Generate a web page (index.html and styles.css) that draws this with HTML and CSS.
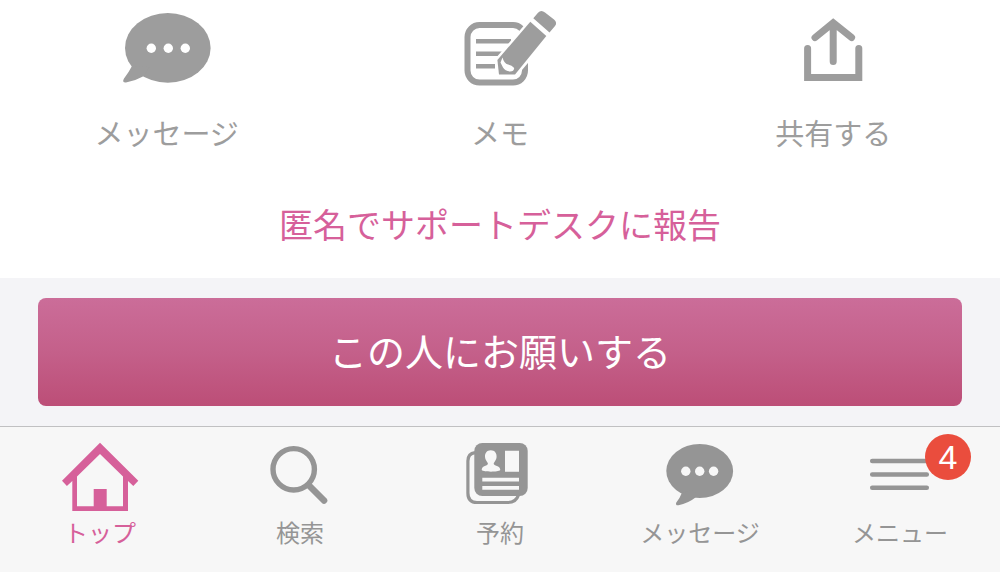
FILE: index.html
```html
<!DOCTYPE html>
<html lang="ja">
<head>
<meta charset="utf-8">
<meta name="viewport" content="width=device-width, initial-scale=1">
<title>プロフィール</title>
<link rel="stylesheet" href="styles.css">
</head>
<body>
<main class="profile">
  <div class="actions">
    <button class="action" type="button">
      <svg class="action-icon" viewBox="107 8 120 82" aria-hidden="true">
        <ellipse cx="167.8" cy="47.9" rx="42.8" ry="34.8" fill="currentColor"/>
        <path d="M131.7 66.5 Q129 72 124 78.5 Q121.6 82.8 126 82.6 Q135 81 143.5 76.3 L150 66 Z" fill="currentColor"/>
        <g fill="#fff"><circle cx="151.3" cy="48.3" r="4.7"/><circle cx="168.3" cy="48.3" r="4.7"/><circle cx="185.3" cy="48.3" r="4.7"/></g>
      </svg>
      <span class="action-label">メッセージ</span>
    </button>
    <button class="action" type="button">
      <svg class="action-icon" viewBox="440 8 120 82" aria-hidden="true">
        <rect x="467.5" y="25" width="57.5" height="57.6" rx="12" fill="none" stroke="currentColor" stroke-width="6"/>
        <path d="M476 41.3H511M476 53.8H502M476 66.3H495" stroke="currentColor" stroke-width="4.6" fill="none"/>
        <path d="M540 11 L557 25 L515 74.5 H498.5 L497.5 60 Z" fill="#fff" stroke="#fff" stroke-width="5" stroke-linejoin="round"/>
        <path d="M530.3 21.7 L546.3 36 L515 74.4 H499 L497.4 60 Z" fill="currentColor"/>
        <path d="M533.3 18.3 L538 12.8 Q541 9.2 545 12.4 L554 19.4 Q557.6 22.6 555 26 L549.5 32.6 Z" fill="currentColor"/>
        <path d="M502.5 57.5 Q504 63.5 508 64.5 Q512 65 514.2 68 Q514 71.5 510 71.6 Q505 71 503 67.5 L500.5 62.5 Z" fill="#fff"/>
      </svg>
      <span class="action-label">メモ</span>
    </button>
    <button class="action" type="button">
      <svg class="action-icon" viewBox="773 8 120 82" aria-hidden="true">
        <g fill="none" stroke="currentColor" stroke-width="7" stroke-linecap="round">
          <path d="M807.6 48.6V77.5H858.8V48.6"/>
          <path d="M815 37.6L833.2 22.8L851.6 37.6M833.2 24V61.6"/>
        </g>
      </svg>
      <span class="action-label">共有する</span>
    </button>
  </div>
  <a class="report" href="#report">匿名でサポートデスクに報告</a>
</main>
<div class="request">
  <button class="request-button" type="button">この人にお願いする</button>
</div>
<nav class="tabs">
  <a class="tab tab-active" href="#top">
    <svg class="tab-icon" viewBox="50 436 100 80" aria-hidden="true">
      <path d="M100 442.7L138.3 480.7L133.3 486L128 481V511H72.3V481L66.9 486L62 480.7ZM100 454L77 476.5V506.3H93.7V489H106.7V506.3H123V476.5Z" fill="currentColor" fill-rule="evenodd"/>
    </svg>
    <span class="tab-label">トップ</span>
  </a>
  <a class="tab" href="#search">
    <svg class="tab-icon" viewBox="250 436 100 80" aria-hidden="true">
      <circle cx="293.7" cy="469.3" r="20.7" fill="none" stroke="currentColor" stroke-width="5.4"/>
      <path d="M309 485.5L324 500.5" stroke="currentColor" stroke-width="6.6" stroke-linecap="round"/>
    </svg>
    <span class="tab-label">検索</span>
  </a>
  <a class="tab" href="#reserve">
    <svg class="tab-icon" viewBox="450 436 100 80" aria-hidden="true">
      <path d="M475 452.6Q467.9 453.5 467.9 461V493Q467.9 502.5 477 502.5H508Q516 502.5 518.5 495" fill="none" stroke="currentColor" stroke-width="3.2"/>
      <rect x="474.3" y="443" width="53.4" height="53" rx="8" fill="currentColor"/>
      <g fill="#f7f7f7">
        <path d="M490.8 450.2C494.8 450.2 496.8 453 496.6 457C496.4 460 494.6 461.5 493.7 463.2C493.4 466.2 500.3 465 500.3 470C498 472.2 484 472.2 481.7 470C481.7 465 488.2 466.2 487.9 463.2C487 461.5 485.2 460 485 457C484.8 453 486.8 450.2 490.8 450.2Z"/>
        <path d="M505 450.7h14v21h-14zM482.3 477.7H519v3.7H482.3zM482.3 486H519v3.7H482.3z"/>
      </g>
    </svg>
    <span class="tab-label">予約</span>
  </a>
  <a class="tab" href="#messages">
    <svg class="tab-icon" viewBox="650 436 100 80" aria-hidden="true">
      <ellipse cx="699.7" cy="471" rx="33.4" ry="27" fill="currentColor"/>
      <path d="M681.8 493Q680 498 676.3 502.5Q675 505.6 678.5 505.3Q688 503.5 695.5 497.6L696 489Z" fill="currentColor"/>
      <g fill="#f7f7f7"><circle cx="685.8" cy="471.3" r="4.7"/><circle cx="699.7" cy="471.3" r="4.7"/><circle cx="713.6" cy="471.3" r="4.7"/></g>
    </svg>
    <span class="tab-label">メッセージ</span>
  </a>
  <a class="tab" href="#menu">
    <span class="tab-figure">
      <svg class="tab-icon" viewBox="850 436 100 80" aria-hidden="true">
        <path d="M872.2 461H926.8M872.2 474.4H926.8M872.2 487.7H926.8" stroke="currentColor" stroke-width="4.5" stroke-linecap="round"/>
      </svg>
      <span class="badge">4</span>
    </span>
    <span class="tab-label">メニュー</span>
  </a>
</nav>
</body>
</html>
```

FILE: styles.css
```css
* {
  box-sizing: border-box;
}

body {
  margin: 0;
  background: #fff;
  font-family: "Noto Sans CJK JP", sans-serif;
}

button {
  border: 0;
  padding: 0;
  background: none;
  font: inherit;
  cursor: pointer;
}

a {
  text-decoration: none;
}

.profile {
  display: flex;
  flex-direction: column;
  padding: 8px 0 30px;
}

.actions {
  display: grid;
  grid-template-columns: repeat(3, 1fr);
}

.action {
  display: flex;
  flex-direction: column;
  align-items: center;
  gap: 22px;
  color: #9d9d9d;
}

.action-icon {
  display: block;
  width: 120px;
  height: 82px;
}

.action-label {
  font-size: 29px;
  line-height: 40px;
}

.report {
  align-self: center;
  margin-top: 48px;
  color: #d6609a;
  font-size: 34px;
  line-height: 48px;
}

.request {
  padding: 20px 38px;
  background: #f4f4f7;
}

.request-button {
  display: block;
  width: 100%;
  border-radius: 8px;
  padding: 24px 0 28px;
  background: linear-gradient(#cb6d99, #c4608a 50%, #bc4e77);
  color: #fff;
  font-size: 38px;
  line-height: 56px;
}

.tabs {
  display: grid;
  grid-template-columns: repeat(5, 1fr);
  border-top: 1px solid #c0c0c2;
  padding: 9px 0 26px;
  background: #f7f7f7;
}

.tab {
  display: flex;
  flex-direction: column;
  align-items: center;
  color: #959595;
}

.tab-active {
  color: #d6609a;
}

.tab-figure {
  position: relative;
}

.tab-icon {
  display: block;
  width: 100px;
  height: 80px;
}

.tab-label {
  font-size: 24px;
  line-height: 31px;
}

.badge {
  position: absolute;
  top: -2px;
  left: 75px;
  width: 46px;
  height: 46px;
  border-radius: 50%;
  background: #ea4d3d;
  color: #fff;
  font-family: "Liberation Sans", sans-serif;
  font-size: 34px;
  line-height: 46px;
  text-align: center;
}
```
